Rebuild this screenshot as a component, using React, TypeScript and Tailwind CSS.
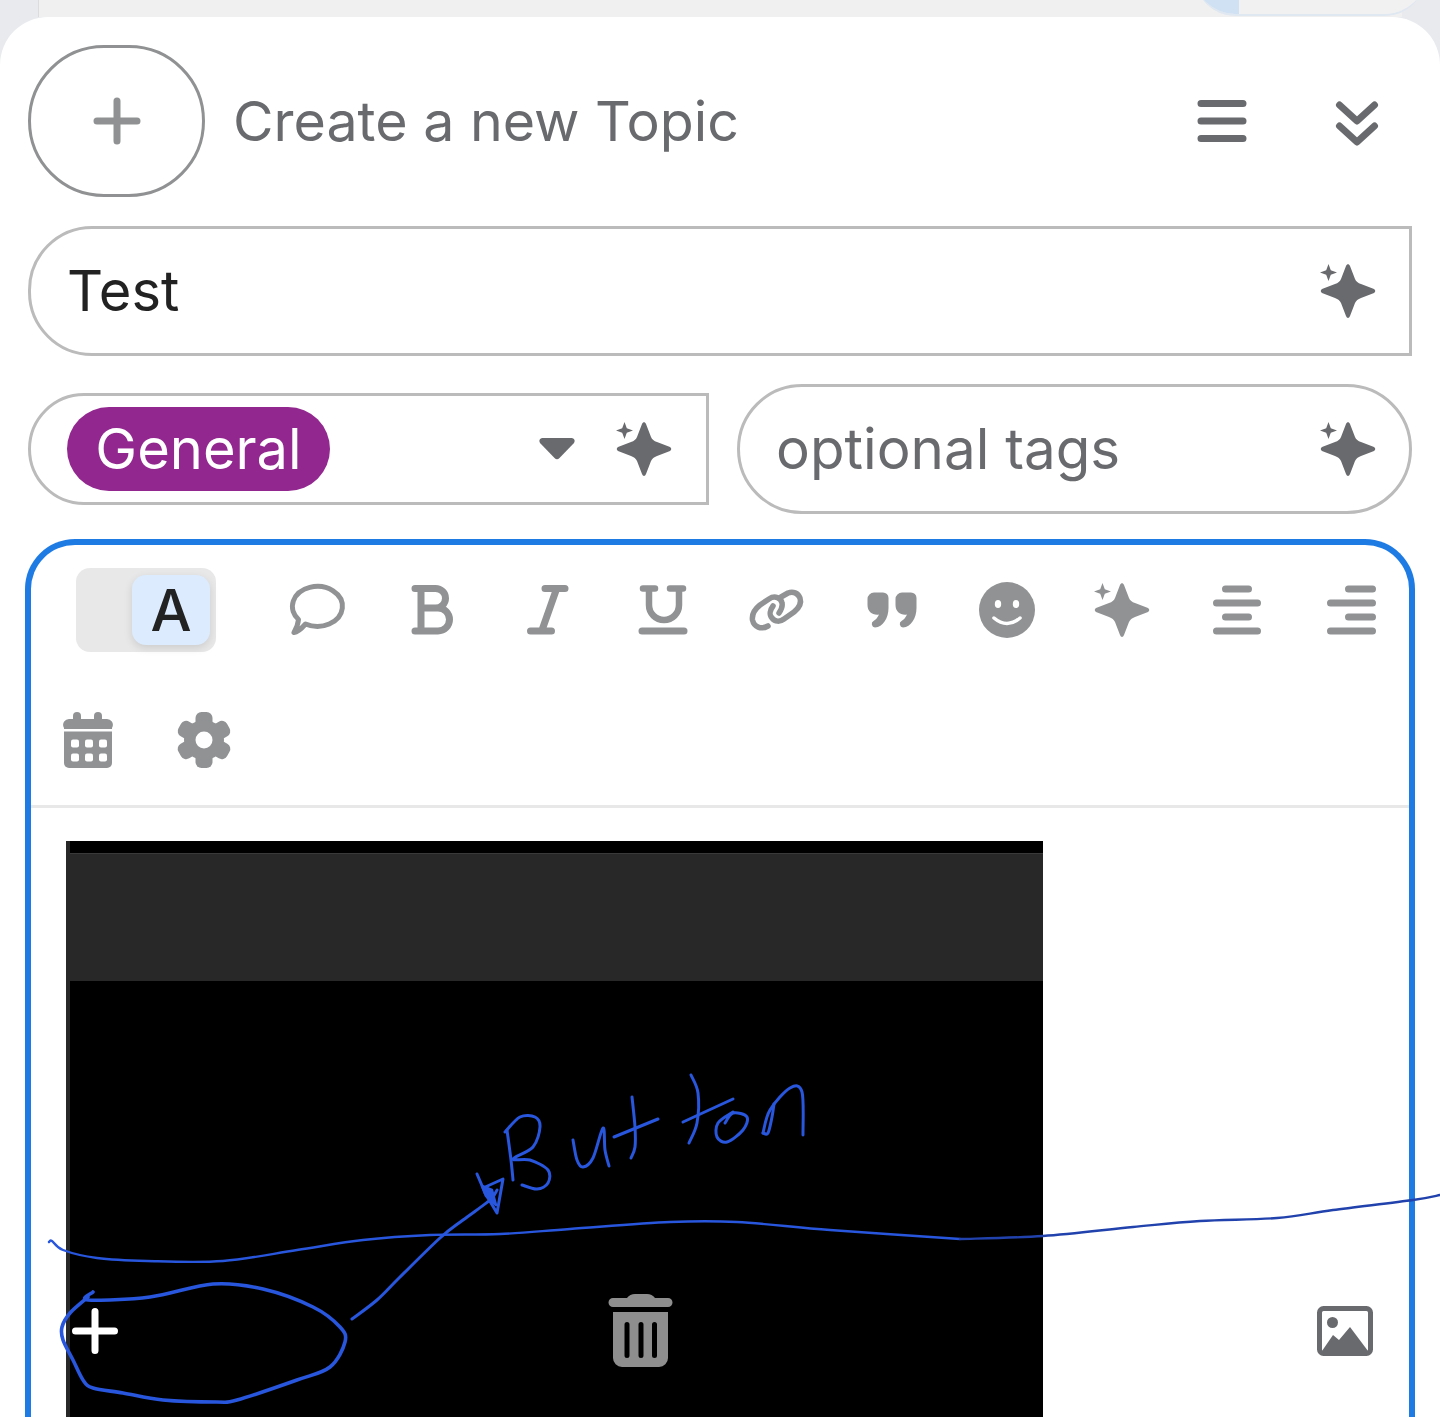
import React from 'react';

type Pt = [number, number];

// smooth line through the points, for the handwriting
const smooth = (pts: Pt[]) => {
  let d = `M${pts[0][0]} ${pts[0][1]}`;
  for (let i = 0; i < pts.length - 1; i++) {
    const p0 = pts[i - 1] || pts[i];
    const p1 = pts[i];
    const p2 = pts[i + 1];
    const p3 = pts[i + 2] || p2;
    const c1x = p1[0] + (p2[0] - p0[0]) / 6;
    const c1y = p1[1] + (p2[1] - p0[1]) / 6;
    const c2x = p2[0] - (p3[0] - p1[0]) / 6;
    const c2y = p2[1] - (p3[1] - p1[1]) / 6;
    d += `C${c1x} ${c1y} ${c2x} ${c2y} ${p2[0]} ${p2[1]}`;
  }
  return d;
};

const longLine: Pt[] = [[49, 1242], [52, 1241], [63, 1250], [97, 1258], [147, 1261], [223, 1261], [297, 1250], [363, 1240], [430, 1235], [500, 1234], [570, 1229], [670, 1222], [737, 1222], [830, 1230], [960, 1239], [1043, 1236], [1133, 1227], [1200, 1221], [1277, 1218], [1333, 1210], [1413, 1200], [1440, 1195]];
const oval: Pt[] = [[93, 1292], [88, 1300], [150, 1297], [213, 1284], [263, 1289], [313, 1307], [340, 1327], [345, 1342], [330, 1367], [297, 1380], [237, 1400], [217, 1402], [163, 1400], [123, 1393], [93, 1388], [83, 1380], [73, 1360], [63, 1340], [62, 1327], [70, 1313], [88, 1297]];
const arrow: Pt[] = [[352, 1319], [377, 1300], [400, 1277], [440, 1238], [463, 1220], [490, 1200], [497, 1190]];
const letters: Pt[][] = [
  [[505, 1132], [520, 1117], [535, 1117], [540, 1127], [533, 1147], [513, 1159], [530, 1160], [548, 1170], [548, 1183], [537, 1189], [522, 1185]],
  [[507, 1130], [511, 1160], [513, 1180]],
  [[573, 1140], [577, 1160], [583, 1167], [593, 1158], [603, 1128], [605, 1150], [609, 1166]],
  [[632, 1097], [635, 1127], [635, 1147], [631, 1158]],
  [[614, 1137], [658, 1119]],
  [[691, 1075], [698, 1093], [697, 1123], [689, 1143]],
  [[683, 1122], [733, 1099]],
  [[725, 1123], [733, 1113], [747, 1117], [743, 1130], [727, 1142], [717, 1137], [718, 1123], [733, 1112]],
  [[763, 1133], [770, 1110], [790, 1088], [802, 1092], [803, 1135]],
  [[763, 1133], [768, 1133], [772, 1117], [774, 1104]],
];

const Scribble = () => (
  <svg className="absolute left-0 top-0 pointer-events-none" width="1440" height="1417" viewBox="0 0 1440 1417" fill="none" stroke="#2856dc" strokeLinecap="round" strokeLinejoin="round">
    <path d={smooth(longLine.slice(0, 15))} strokeWidth="2.4" />
    <path d={smooth(longLine.slice(14))} strokeWidth="2.4" stroke="#2142ac" />
    <path d={smooth(oval)} strokeWidth="3.6" />
    <path d={smooth(arrow)} strokeWidth="3" />
    {letters.map((l, i) => (
      <path key={i} d={smooth(l)} strokeWidth="3" />
    ))}
    <path d="M477 1174L483 1188L503 1179L497 1213L485 1193L483 1188" strokeWidth="3" />
    <path d="M482 1186L492 1190L496 1205L486 1196Z" fill="#2856dc" strokeWidth="2.5" />
  </svg>
);

const Sparkle = ({ color }: { color: string }) => (
  <svg width="56" height="54" viewBox="0 0 56 54" fill={color}>
    <path d="M26 2C27 -.5 29 -.5 30 2L35 15Q36.500 18.500 41 20L54 25Q56.500 27 54 29L41 34Q36.500 35.500 35 39L30 52C29 54.500 27 54.500 26 52L21 39Q19.500 35.500 15 34L2 29Q-.5 27 2 25L15 20Q19.500 18.500 21 15Z" />
    <path d="M8.5 0L10.8 6.200L17 8.500L10.800 10.800L8.500 17L6.200 10.800L0 8.500L6.200 6.200Z" />
  </svg>
);

const Tool = ({ children }: { children: React.ReactNode }) => (
  <div className="flex h-[130px] w-[115px] items-center justify-center">{children}</div>
);

const Icon = ({ children }: { children: React.ReactNode }) => (
  <svg width="60" height="60" viewBox="0 0 60 60" fill="none" stroke="#909294" strokeWidth="7" strokeLinecap="round" strokeLinejoin="round">
    {children}
  </svg>
);

const quote = 'M12 12.500H21a5.500 5.500 0 0 1 5.500 5.500V28C26.500 38 21 47 13 47.500a3.500 3.500 0 0 1-1.500-6.500C14 39.500 16 37 17 34.500C11 35.500 5.500 32 5.500 25V19a6.500 6.500 0 0 1 6.500-6.500Z';

export default function App() {
  return (
    <div className="relative h-[1417px] w-[1440px] overflow-hidden bg-[#e8eaee] font-['Inter',sans-serif]">
      {/* page behind the sheet */}
      <div className="ml-[38px] mr-[38px] h-[17px] border-l border-[#dcdcdc] bg-[#f0f0f0]" />
      <div className="absolute right-[15px] top-[-40px] flex h-[56px] w-[230px] overflow-hidden rounded-b-[40px] border-b-2 border-[#dfe7f1]">
        <div className="w-[44px] bg-[#d0e1f4]" />
        <div className="flex-1 bg-[#f1f1f2]" />
      </div>

      <div className="relative flex h-[1400px] flex-col rounded-t-[48px] bg-white pt-[28px]">
        <div className="flex h-[152px] shrink-0 items-center px-[28px]">
          <button className="flex h-[152px] w-[177px] items-center justify-center rounded-full border-[3px] border-[#8f9192]">
            <svg width="48" height="48" viewBox="0 0 48 48" stroke="#8f9192" strokeWidth="7" strokeLinecap="round">
              <path d="M24 4V44M4 24H44" />
            </svg>
          </button>
          <span className="ml-[28px] text-[55.5px] leading-none text-[#696a6d]">Create a new Topic</span>
          <div className="ml-auto mr-[33px] flex items-center gap-[88px]">
            <svg width="50" height="44" viewBox="0 0 50 44" stroke="#696a6d" strokeWidth="7" strokeLinecap="round">
              <path d="M4 4.500H46M4 22H46M4 39.500H46" />
            </svg>
            <svg width="44" height="52" viewBox="0 0 44 52" fill="none" stroke="#696a6d" strokeWidth="7" strokeLinecap="round" strokeLinejoin="round">
              <path d="M4.500 10L22 26L39.500 10M4.500 31L22 47L39.500 31" />
            </svg>
          </div>
        </div>

        <div className="mx-[28px] mt-[29px] flex h-[130px] shrink-0 items-center justify-between rounded-l-[64px] border-[3px] border-[#bbbbbb] pl-[36px] pr-[33px]">
          <span className="text-[56px] leading-none text-[#222222]">Test</span>
          <Sparkle color="#696a6d" />
        </div>

        <div className="mx-[28px] mt-[28px] flex h-[130px] shrink-0 items-center justify-between">
          <div className="flex h-[112px] w-[681px] items-center rounded-l-[56px] border-[3px] border-[#bbbbbb] pl-[36px] pr-[34px]">
            <span className="flex h-[84px] w-[263px] items-center justify-center rounded-full bg-[#92278f] text-[56px] leading-none text-white">General</span>
            <svg className="ml-auto mr-[41px]" width="36" height="22" viewBox="0 0 36 22" fill="#696a6d">
              <path d="M3 0H33Q37 1 35 5L20.500 20Q18 22.500 15.500 20L1 5Q-1 1 3 0Z" />
            </svg>
            <Sparkle color="#696a6d" />
          </div>
          <div className="flex h-[130px] w-[675px] items-center justify-between rounded-full border-[3px] border-[#bbbbbb] pl-[36px] pr-[33px]">
            <span className="text-[56.5px] leading-none text-[#696a6d]">optional tags</span>
            <Sparkle color="#696a6d" />
          </div>
        </div>

        <div className="relative mx-[25px] mt-[25px] flex-1 rounded-t-[50px] border-[6px] border-b-0 border-[#1f7be4]">
          <div className="flex flex-wrap">
            <div className="flex h-[130px] w-[228px] items-center pl-[45px]">
              <div className="flex h-[84px] w-[140px] items-center justify-end rounded-[14px] bg-[#e8e8e8] pr-[6px]">
                <div className="flex h-[70px] w-[78px] items-center justify-center rounded-[14px] bg-[#dcebfd] text-[58px] font-medium leading-none text-[#222222] shadow-[0_3px_8px_rgba(0,0,0,0.12)]">A</div>
              </div>
            </div>
            <Tool>
              <Icon>
                <path strokeWidth="5" d="M18.500 44A25 20 0 1 0 11.500 39.500C11 45 9 49 7 52.500C11 52 15 48 18.500 44Z" />
              </Icon>
            </Tool>
            <Tool>
              <Icon>
                <path d="M13 8.500H33.500a10 9.750 0 0 1 0 19.500H19M19 28H36a11.500 11.500 0 0 1 0 23H13M19 8.500V51" />
              </Icon>
            </Tool>
            <Tool>
              <Icon>
                <path d="M28 8.500H48M13.500 51H34.500M39.700 8.500L24.700 51" />
              </Icon>
            </Tool>
            <Tool>
              <Icon>
                <path strokeWidth="6.500" d="M11 8.500H23M38 8.500H51M17 8.500V25a15 15 0 0 0 30 0V8.500" />
                <path d="M10 51H52" />
              </Icon>
            </Tool>
            <Tool>
              <Icon>
                <path strokeWidth="5.500" d="M21 46C14 50 7 47 5.500 40C4.500 33 8 29 13 25L22 19C28 15 34 18 35 23C36 27 34 30 32 33" />
                <path strokeWidth="5.500" d="M26 26C23 30 22 35 25 38C28 42 33 42 37 39L47 32C52 28 55 24 53 18C51 13 46 11 41 13L34 17" />
              </Icon>
            </Tool>
            <Tool>
              <svg width="60" height="60" viewBox="0 0 60 60" fill="#909294">
                <path d={quote} />
                <path d={quote} transform="translate(28 0)" />
              </svg>
            </Tool>
            <Tool>
              <svg width="60" height="60" viewBox="0 0 60 60">
                <circle cx="30" cy="30" r="28" fill="#909294" />
                <ellipse cx="21" cy="24" rx="3.200" ry="4" fill="#fff" />
                <ellipse cx="39" cy="24" rx="3.200" ry="4" fill="#fff" />
                <path d="M17 38Q30 49 43 38" stroke="#fff" strokeWidth="3.500" fill="none" strokeLinecap="round" />
              </svg>
            </Tool>
            <Tool>
              <Sparkle color="#909294" />
            </Tool>
            <Tool>
              <Icon>
                <path d="M18.500 9H41.500M9.500 23H50.500M18.500 37H41.500M9.500 51H50.500" />
              </Icon>
            </Tool>
            <Tool>
              <Icon>
                <path d="M26.500 9H50.500M8.500 23H50.500M26.500 37H50.500M8.500 51H50.500" />
              </Icon>
            </Tool>
            <Tool>
              <svg width="60" height="60" viewBox="0 0 60 60" fill="#909294">
                <rect x="14" y="2" width="8" height="12" rx="4" />
                <rect x="35" y="2" width="8" height="12" rx="4" />
                <path d="M5 18a6 6 0 0 1 6-9H47a6 6 0 0 1 6 9V19H5Z" />
                <path d="M5 21.500H53V53a5 5 0 0 1-5 5H10a5 5 0 0 1-5-5Z" />
                <g fill="#fff">
                  <rect x="12" y="29.500" width="8" height="8" rx="2" />
                  <rect x="26" y="29.500" width="8" height="8" rx="2" />
                  <rect x="40" y="29.500" width="8" height="8" rx="2" />
                  <rect x="12" y="43.500" width="8" height="8" rx="2" />
                  <rect x="26" y="43.500" width="8" height="8" rx="2" />
                  <rect x="40" y="43.500" width="8" height="8" rx="2" />
                </g>
              </svg>
            </Tool>
            <Tool>
              <svg width="60" height="60" viewBox="0 0 60 60" fill="#909294">
                <rect x="21.500" y="2" width="17" height="56" rx="6" />
                <rect x="21.500" y="2" width="17" height="56" rx="6" transform="rotate(60 30 30)" />
                <rect x="21.500" y="2" width="17" height="56" rx="6" transform="rotate(120 30 30)" />
                <circle cx="30" cy="30" r="20" />
                <circle cx="30" cy="30" r="8.500" fill="#fff" />
              </svg>
            </Tool>
          </div>

          <div className="relative border-t-[3px] border-[#e8e8e8] pl-[35px] pt-[33px]">
            <div className="h-[600px] w-[977px] border-l-4 border-[#282828] bg-black pt-[12px]">
              <div className="h-[128px] border-t border-[#3a3a3a] bg-[#282828]" />
            </div>
            <div className="absolute left-[41px] right-[36px] top-[486px] flex h-[74px] items-center">
              <svg width="46" height="46" viewBox="0 0 46 46" stroke="#fff" strokeWidth="7" strokeLinecap="round">
                <path d="M23 3.500V42.500M3.500 23H42.500" />
              </svg>
              <svg className="ml-[490px]" width="65" height="74" viewBox="0 0 65 74" fill="#8e8e8e">
                <path d="M19 4Q22 0 27 0H39Q44 0 47 4H60a4.500 4.500 0 0 1 0 9H5a4.500 4.500 0 0 1 0-9Z" />
                <path fillRule="evenodd" d="M5 18H60V64a9 9 0 0 1-9 9H14a9 9 0 0 1-9-9ZM19 28a2.500 2.500 0 0 0-2.500 2.500V61.500a2.500 2.500 0 0 0 5 0V30.500A2.500 2.500 0 0 0 19 28ZM33 28a2.500 2.500 0 0 0-2.500 2.500V61.500a2.500 2.500 0 0 0 5 0V30.500A2.500 2.500 0 0 0 33 28ZM46.500 28a2.500 2.500 0 0 0-2.500 2.500V61.500a2.500 2.500 0 0 0 5 0V30.500A2.500 2.500 0 0 0 46.500 28Z" />
              </svg>
              <svg className="ml-auto" width="56" height="50" viewBox="0 0 56 50" fill="#696a6d">
                <rect x="2.500" y="2.500" width="51" height="45" rx="4" fill="none" stroke="#696a6d" strokeWidth="5" />
                <circle cx="15.500" cy="16.500" r="5.500" />
                <path d="M5 45L16 29L22 34L33 21L51 45Z" />
              </svg>
            </div>
          </div>
        </div>
      </div>

      <Scribble />
    </div>
  );
}
